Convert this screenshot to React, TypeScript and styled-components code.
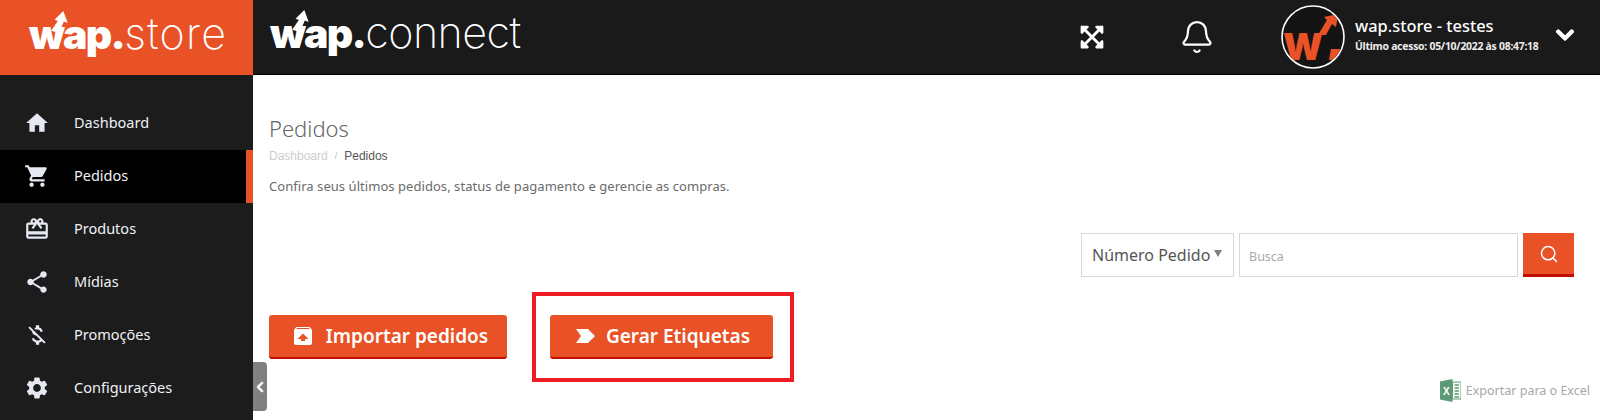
import * as React from "react";
import styled, { createGlobalStyle } from "styled-components";
import { MdHome, MdShoppingCart, MdRedeem, MdShare, MdMoneyOff, MdSettings, MdUnarchive } from "react-icons/md";
import { FaExpandArrowsAlt, FaChevronDown, FaChevronLeft } from "react-icons/fa";
import { Bell, Search } from "lucide-react";

const ORANGE = "#e95226";
const DARK = "#1a1a1a";
const UI_FONT = `"Noto Sans", "Open Sans", sans-serif`;

const GlobalStyle = createGlobalStyle`
  html, body { margin: 0; padding: 0; background: #fff; }
  * { box-sizing: border-box; }
`;

const Page = styled.div`
  width: 1600px;
  height: 420px;
  overflow: hidden;
  display: grid;
  grid-template-columns: 253px 1fr;
  grid-template-rows: 75px 1fr;
  font-family: ${UI_FONT};
`;

const BrandCell = styled.div`
  background: ${ORANGE};
  display: flex;
  align-items: center;
  padding: 0 0 9px 29px;
`;

const TopBar = styled.header`
  background: ${DARK};
  border-bottom: 1px solid #000;
  display: flex;
  align-items: center;
  padding-left: 17px;
  color: #fff;
`;

const Wordmark = styled.div<{ $spacing: number }>`
  position: relative;
  color: #fff;
  font-family: Inter, "Liberation Sans", sans-serif;
  font-size: 43px;
  line-height: 50px;
  letter-spacing: ${(p) => p.$spacing}px;
  white-space: nowrap;
  font-weight: 200;
`;

const HeaderWordmark = styled(Wordmark)`
  margin-bottom: 9px;
`;

const WordmarkBold = styled.b`
  font-size: 41px;
  font-weight: 900;
  letter-spacing: -1.7px;
`;

const WordmarkArrow = styled.svg`
  position: absolute;
  left: 22px;
  top: 3px;
`;

const TopIcons = styled.div`
  margin-left: auto;
  display: flex;
  align-items: center;
  height: 100%;
`;

const ExpandSlot = styled.div`
  width: 26px;
  display: flex;
  justify-content: center;
  margin-right: 74px;
`;

const BellSlot = styled.div`
  width: 36px;
  display: flex;
  justify-content: center;
  margin-right: 66px;
`;

const Avatar = styled.svg`
  display: block;
  margin-right: 10px;
`;

const UserInfo = styled.div`
  width: 200px;
  display: flex;
  flex-direction: column;
  gap: 4px;
  padding-bottom: 6px;
`;

const UserName = styled.div`
  font-size: 16.4px;
  line-height: 20px;
  font-weight: 500;
`;

const LastSeen = styled.div`
  font-size: 10.4px;
  line-height: 12px;
  font-weight: 700;
  letter-spacing: -0.25px;
  color: #eee;
`;

const ChevronSlot = styled.div`
  display: flex;
  margin: 0 25px 5px 0;
`;

const Sidebar = styled.nav`
  background: #1c1c1c;
  padding-top: 22px;
  display: flex;
  flex-direction: column;
`;

const NavRow = styled.a<{ $active?: boolean }>`
  height: 53px;
  flex: none;
  display: flex;
  align-items: center;
  padding: 0 0 2px 24px;
  gap: 24px;
  color: #eef0f6;
  font-size: 14.5px;
  background: ${(p) => (p.$active ? "#000" : "transparent")};
  border-right: 7px solid ${(p) => (p.$active ? ORANGE : "transparent")};

  svg {
    flex: none;
    color: #e6e9f2;
  }
`;

const NavLabel = styled.span`
  padding-bottom: 2px;
`;

const Main = styled.main`
  position: relative;
  padding: 37px 26px 0 16px;
  display: flex;
  flex-direction: column;
  color: #666;
`;

const CollapseTab = styled.div`
  position: absolute;
  left: 0;
  top: 287px;
  width: 14px;
  height: 49px;
  background: #808080;
  border-radius: 0 4px 4px 0;
  color: #fff;
  display: flex;
  align-items: center;
  justify-content: center;
`;

const Title = styled.h1`
  margin: 0;
  font-size: 22px;
  line-height: 32px;
  font-weight: 300;
  color: #666;
`;

const Crumbs = styled.div`
  display: flex;
  align-items: center;
  gap: 7px;
  margin-top: 5px;
  font-family: "Liberation Sans", Arial, sans-serif;
  font-size: 12px;
  line-height: 14px;
  color: #ccc;
`;

const CrumbSeparator = styled.span`
  font-size: 9px;
  color: #bbb;
`;

const CrumbCurrent = styled.span`
  color: #555;
`;

const Description = styled.p`
  margin: 14px 0 0;
  font-size: 13px;
  line-height: 18px;
  letter-spacing: 0.05px;
  color: #6b6b6b;
`;

const SearchBar = styled.div`
  display: flex;
  justify-content: flex-end;
  gap: 5px;
  height: 44px;
  margin-top: 38px;
`;

const FieldBox = styled.div`
  height: 44px;
  border: 1px solid #d8d8d8;
  display: flex;
  align-items: center;
  background: #fff;
`;

const SelectBox = styled(FieldBox)`
  width: 153px;
  padding-left: 10px;
  font-size: 16px;
  color: #555;
  gap: 4px;
  white-space: nowrap;
`;

const Caret = styled.span`
  width: 0;
  height: 0;
  border-left: 4px solid transparent;
  border-right: 4px solid transparent;
  border-top: 7px solid #808080;
  margin-top: -4px;
`;

const InputBox = styled(FieldBox)`
  width: 279px;
  padding: 2px 0 0 9px;
  font-size: 12.5px;
  color: #aaa;
`;

const SearchButton = styled.button`
  width: 51px;
  height: 44px;
  padding: 0;
  border: 0;
  border-bottom: 3px solid #c40f00;
  background: ${ORANGE};
  color: #fff;
  display: flex;
  align-items: center;
  justify-content: center;
`;

const ActionRow = styled.div`
  display: flex;
  align-items: flex-start;
  gap: 25px;
  margin-top: 15px;
`;

const ActionColumn = styled.div`
  padding-top: 23px;
`;

const Highlight = styled.div`
  width: 262px;
  height: 90px;
  border: 4px solid #ee1c25;
  padding: 19px 0 0 14px;
`;

const ActionButton = styled.button<{ $width: number }>`
  width: ${(p) => p.$width}px;
  height: 44px;
  padding: 0 0 0 3px;
  border: 0;
  border-bottom: 2px solid #c40f00;
  border-radius: 3px;
  background: ${ORANGE};
  color: #fff;
  font-family: ${UI_FONT};
  font-size: 19px;
  font-weight: 600;
  display: flex;
  align-items: center;
  justify-content: center;
  gap: 11px;
`;

const ExportLink = styled.div`
  position: absolute;
  right: 10px;
  top: 304px;
  display: flex;
  align-items: center;
  gap: 5px;
  font-size: 12.5px;
  color: #a8a8a8;
  white-space: nowrap;
`;

const navItems = [
  { label: "Dashboard", Icon: MdHome },
  { label: "Pedidos", Icon: MdShoppingCart, active: true },
  { label: "Produtos", Icon: MdRedeem },
  { label: "Mídias", Icon: MdShare },
  { label: "Promoções", Icon: MdMoneyOff },
  { label: "Configurações", Icon: MdSettings },
];

const LogoArrow = () => (
  <WordmarkArrow width="18" height="22" viewBox="0 0 16 20">
    <path d="M0 18 L6 9 L3 8 L11 0 L15 11 L11.5 9.5 L7 20 Z" fill="#fff" />
  </WordmarkArrow>
);

const UserAvatar = () => (
  <Avatar width="64" height="64" viewBox="0 0 64 64">
    <defs>
      <clipPath id="avatarClip">
        <circle cx="32" cy="32" r="30" />
      </clipPath>
    </defs>
    <circle cx="32" cy="32" r="31" fill="#141414" stroke="#fff" strokeWidth="1.6" />
    <g clipPath="url(#avatarClip)" fill={ORANGE}>
      <text x="2" y="55" fontFamily="Inter, 'Liberation Sans', sans-serif" fontSize="37" fontWeight="900">W</text>
      <path d="M37 30 L45 30 L51 19 L55 22 L57 9 L43 12 L46 15 Z" />
      <path d="M50 44 H62 V55 H48 Z" />
    </g>
  </Avatar>
);

const ArrowTag = () => (
  <svg width="19" height="14" viewBox="0 0 19 14">
    <path d="M0 0 H12 L19 7 L12 14 H0 L5 7 Z" fill="#fff" />
  </svg>
);

const ExcelIcon = () => (
  <svg width="21" height="23" viewBox="0 0 21 23">
    <path d="M0 2.5 L12.5 0 V23 L0 20.5 Z" fill="#5c9a76" />
    <path d="M12.5 3 H21 V20 H12.5 Z" fill="#fff" stroke="#5c9a76" />
    <path d="M14.5 6 H19 M14.5 9 H19 M14.5 12 H19 M14.5 15 H19 M14.5 18 H19" stroke="#5c9a76" strokeWidth="1.4" />
    <text x="3" y="15.5" fontFamily="'Liberation Sans', sans-serif" fontSize="10" fontWeight="700" fill="#fff">X</text>
  </svg>
);

export default function App() {
  return (
    <>
      <GlobalStyle />
      <Page>
        <BrandCell>
          <Wordmark $spacing={1.2}>
            <LogoArrow />
            <WordmarkBold>wap.</WordmarkBold>store
          </Wordmark>
        </BrandCell>
        <TopBar>
          <HeaderWordmark $spacing={-0.5}>
            <LogoArrow />
            <WordmarkBold>wap.</WordmarkBold>connect
          </HeaderWordmark>
          <TopIcons>
            <ExpandSlot>
              <FaExpandArrowsAlt size={26} color="#fff" />
            </ExpandSlot>
            <BellSlot>
              <Bell size={36} color="#fff" strokeWidth={1.5} />
            </BellSlot>
            <UserAvatar />
            <UserInfo>
              <UserName>wap.store - testes</UserName>
              <LastSeen>Último acesso: 05/10/2022 às 08:47:18</LastSeen>
            </UserInfo>
            <ChevronSlot>
              <FaChevronDown size={20} color="#fff" stroke="#fff" strokeWidth={30} />
            </ChevronSlot>
          </TopIcons>
        </TopBar>
        <Sidebar>
          {navItems.map(({ label, Icon, active }) => (
            <NavRow key={label} $active={active}>
              <Icon size={26} />
              <NavLabel>{label}</NavLabel>
            </NavRow>
          ))}
        </Sidebar>
        <Main>
          <CollapseTab>
            <FaChevronLeft size={12} stroke="#fff" strokeWidth={30} />
          </CollapseTab>
          <Title>Pedidos</Title>
          <Crumbs>
            Dashboard <CrumbSeparator>/</CrumbSeparator> <CrumbCurrent>Pedidos</CrumbCurrent>
          </Crumbs>
          <Description>Confira seus últimos pedidos, status de pagamento e gerencie as compras.</Description>
          <SearchBar>
            <SelectBox>
              Número Pedido
              <Caret />
            </SelectBox>
            <InputBox>Busca</InputBox>
            <SearchButton>
              <Search size={20} strokeWidth={1.8} />
            </SearchButton>
          </SearchBar>
          <ActionRow>
            <ActionColumn>
              <ActionButton $width={238}>
                <MdUnarchive size={24} />
                Importar pedidos
              </ActionButton>
            </ActionColumn>
            <Highlight>
              <ActionButton $width={223}>
                <ArrowTag />
                Gerar Etiquetas
              </ActionButton>
            </Highlight>
          </ActionRow>
          <ExportLink>
            <ExcelIcon />
            Exportar para o Excel
          </ExportLink>
        </Main>
      </Page>
    </>
  );
}
